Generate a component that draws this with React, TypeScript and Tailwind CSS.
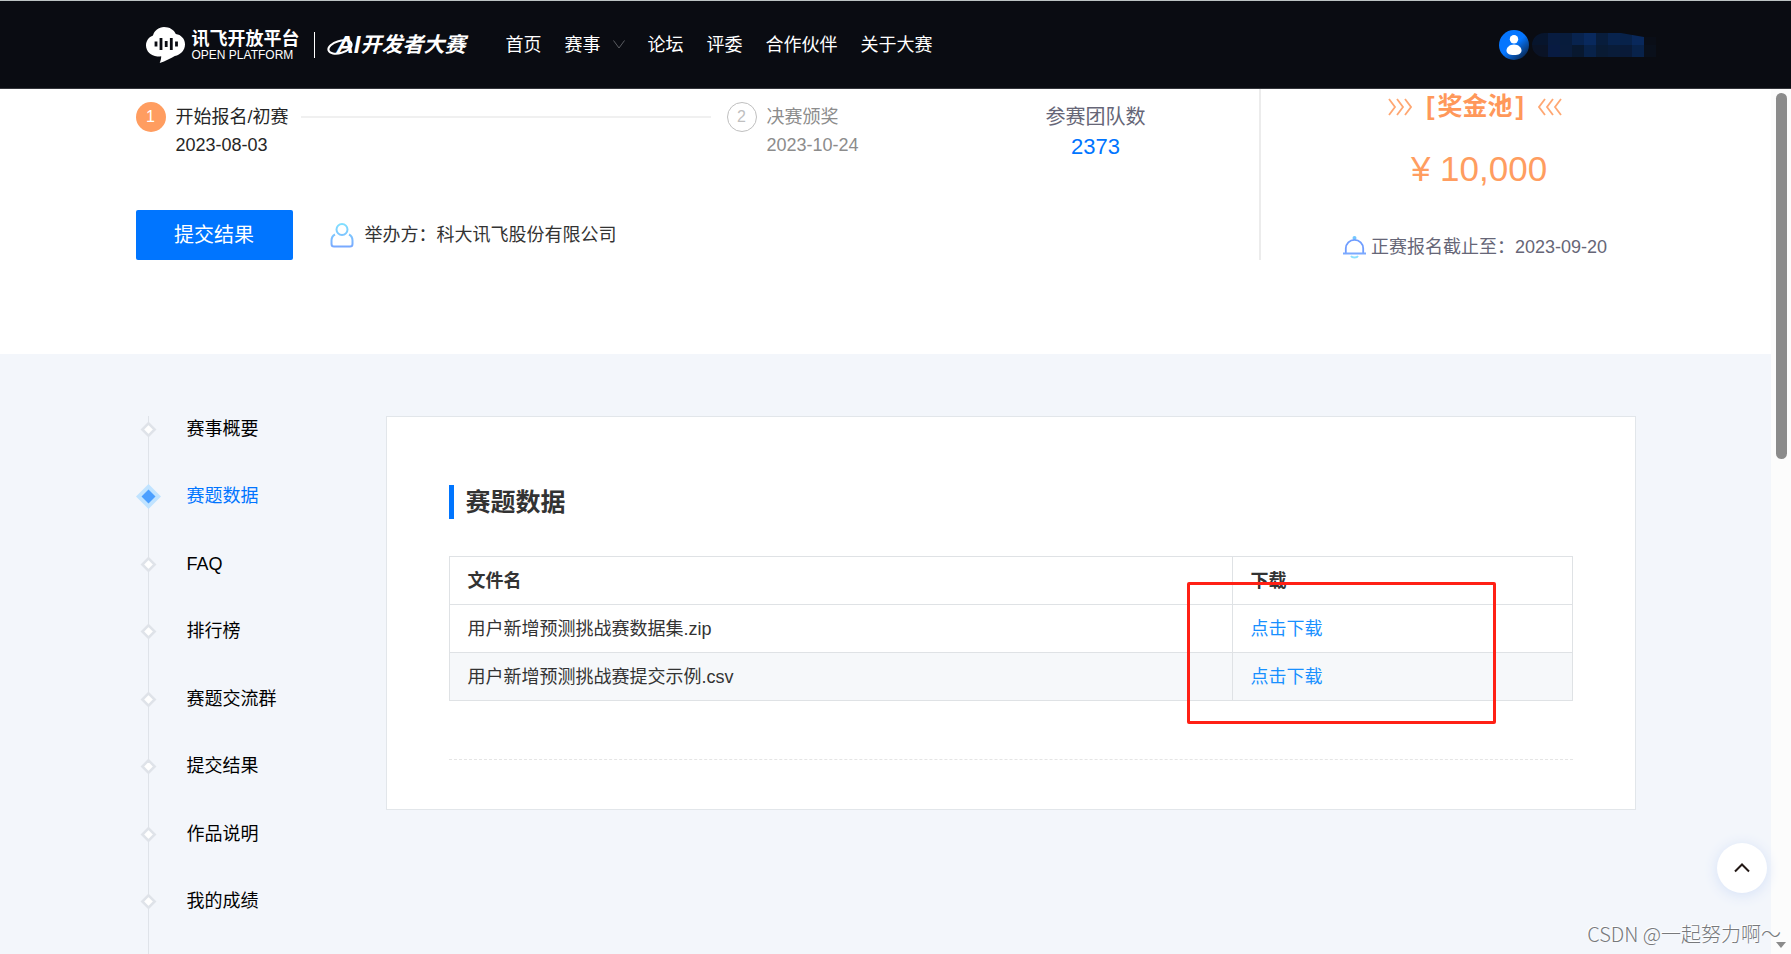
const navItems = [
  { label: "首页" },
  { label: "赛事", hasMenu: true },
  { label: "论坛" },
  { label: "评委" },
  { label: "合作伙伴" },
  { label: "关于大赛" },
];

const sections = [
  "赛事概要",
  "赛题数据",
  "FAQ",
  "排行榜",
  "赛题交流群",
  "提交结果",
  "作品说明",
  "我的成绩",
];

const files = ["用户新增预测挑战赛数据集.zip", "用户新增预测挑战赛提交示例.csv"];

const maskTop = ["#07152d", "#081c40", "#081c3c", "#08234e", "#09295d", "#081d3c", "#08234d", "#08224a", "#09285b", "#0a0e17"];
const maskBottom = ["#0a1326", "#081b42", "#091c3c", "#08182f", "#082249", "#091b34", "#091c39", "#091a38", "#08224a", "#0a101b"];

const Logo = () => (
  <a href="#home" className="flex items-center text-white">
    <svg width="39" height="36" viewBox="0 0 39 36" aria-hidden="true">
      <path
        fill="#fff"
        d="M18 0c5.500 0 10 2.800 11.800 6.900 5.300.6 9.200 5 9.200 10.300 0 5.800-4.300 10.700-10.200 11.800C25.200 30.800 19.500 34.500 13.700 36c1-2.300 1.500-4.700 1.500-6.800-1.400.3-2.700.4-4 .3C4.900 29.100 0 24.400 0 18.600c0-4.700 2.900-8.500 7-10C8.300 3.500 12.700 0 18 0Z"
      />
      <path
        stroke="#0a0c12"
        strokeWidth="2.800"
        d="M10 14.500v5M15 11v12M20.200 14v6M25.300 11v12M30.500 14.500v5"
      />
    </svg>
    <span className="ml-[7px] flex flex-col">
      <span className="text-[18px] leading-5 font-bold">讯飞开放平台</span>
      <span className="text-[12px] leading-3">OPEN PLATFORM</span>
    </span>
    <span className="mx-[14px] h-[26px] w-px bg-white" />
    <span className="relative flex items-center italic font-bold">
      <span className="pl-2 text-[24px] leading-6">AI</span>
      <svg
        className="absolute -left-1 top-0"
        width="30"
        height="24"
        viewBox="0 0 30 24"
        fill="none"
        aria-hidden="true"
      >
        <ellipse cx="15" cy="14" rx="12" ry="6" stroke="#fff" strokeWidth="2" transform="rotate(-16 15 14)" />
      </svg>
      <span className="text-[21px] leading-6">开发者大赛</span>
    </span>
  </a>
);

const UserBadge = () => (
  <div className="ml-auto flex items-center gap-[3px]">
    <button type="button" aria-label="用户">
      <svg width="30" height="30" viewBox="0 0 30 30" className="block">
        <defs>
          <linearGradient id="avatar" x1="0.200" y1="0.200" x2="0.900" y2="1">
            <stop offset="0.400" stopColor="#0576ff" />
            <stop offset="1" stopColor="#0a1a33" />
          </linearGradient>
        </defs>
        <circle cx="15" cy="15" r="15" fill="url(#avatar)" />
        <circle cx="15" cy="9.200" r="4.200" fill="#fff" />
        <path fill="#fff" d="M15 14.500c4.500 0 7.500 3 7.500 6 0 3.200-3 4.500-7.500 4.500s-7.500-1.300-7.500-4.500c0-3 3-6 7.500-6Z" />
      </svg>
    </button>
    {/* masked user name */}
    <svg width="124" height="24" viewBox="0 0 124 24" aria-hidden="true">
      <clipPath id="mask">
        <path d="M12 0h77l23 4h12v20H12A12 12 0 0 1 12 0Z" />
      </clipPath>
      <g clipPath="url(#mask)" shapeRendering="crispEdges">
        {maskTop.map((fill, i) => (
          <rect key={i} x={i ? i * 12 + 4 : 0} y="0" width={i ? 12 : 16} height="12" fill={fill} />
        ))}
        {maskBottom.map((fill, i) => (
          <rect key={i} x={i ? i * 12 + 4 : 0} y="12" width={i ? 12 : 16} height="12" fill={fill} />
        ))}
      </g>
    </svg>
  </div>
);

const Header = () => (
  <header className="shrink-0 border-t border-b border-t-[#bcc3c3] border-b-[#34363b] bg-[#0a0c12]">
    <div className="mx-auto flex h-[87px] max-w-[1520px] items-center pl-[10px]">
      <Logo />
      <nav className="ml-10 flex items-center gap-[23px] text-[18px] leading-6 text-white">
        {navItems.map((item) => (
          <a key={item.label} href="#nav" className="flex items-center gap-3 whitespace-nowrap">
            {item.label}
            {item.hasMenu && (
              <svg width="12" height="9" viewBox="0 0 12 9" fill="none" aria-hidden="true">
                <path stroke="#5b5d62" d="m.5.5 5.500 7.500L11.500.5" />
              </svg>
            )}
          </a>
        ))}
      </nav>
      <UserBadge />
    </div>
  </header>
);

const Arrows = ({ left }: { left?: boolean }) => (
  <svg width="24" height="18" viewBox="0 0 24 18" fill="none" aria-hidden="true">
    <path
      stroke="#ffa772"
      strokeWidth="1.800"
      d={
        left
          ? "M7 1 1 9l6 8M15 1 9 9l6 8M23 1l-6 8 6 8"
          : "m1 1 6 8-6 8M9 1l6 8-6 8M17 1l6 8-6 8"
      }
    />
  </svg>
);

const Hero = () => (
  <section className="shrink-0 bg-white pb-[94px]">
    <div className="mx-auto flex h-[171px] max-w-[1500px]">
      <div className="flex flex-1 flex-col justify-between border-r-2 border-[#ececec] pt-[13px]">
        <div className="flex text-[18px]">
          <div className="flex flex-1 gap-[10px]">
            <span className="flex size-[30px] items-center justify-center rounded-full bg-[#ff9d60] text-[16px] text-white">
              1
            </span>
            <div className="flex-1 text-[#262626]">
              <p className="flex items-center gap-3 leading-[30px]">
                开始报名/初赛
                <span className="mr-4 h-[2px] flex-1 bg-[#f0f0f0]" />
              </p>
              <p className="leading-[26px]">2023-08-03</p>
            </div>
          </div>
          <div className="flex w-[206px] gap-[10px]">
            <span className="flex size-[30px] items-center justify-center rounded-full border border-[#bfbfbf] text-[16px] text-[#bfbfbf]">
              2
            </span>
            <div className="text-[#8c8c8c]">
              <p className="leading-[30px]">决赛颁奖</p>
              <p className="leading-[26px]">2023-10-24</p>
            </div>
          </div>
          <div className="w-[326px] text-center">
            <p className="text-[20px] leading-[30px] text-[#666677]">参赛团队数</p>
            <p className="text-[22px] leading-[30px] text-[#0075ff]">2373</p>
          </div>
        </div>
        <div className="flex items-center">
          <button type="button" className="h-[50px] w-[157px] rounded-xs bg-[#0075ff] text-[20px] text-white">
            提交结果
          </button>
          <svg className="ml-9" width="26" height="26" viewBox="0 0 26 26" fill="none" aria-hidden="true">
            <defs>
              <linearGradient id="person" x1="0" y1="0" x2="0" y2="26" gradientUnits="userSpaceOnUse">
                <stop stopColor="#82e4ff" />
                <stop offset="1" stopColor="#78a6ff" />
              </linearGradient>
            </defs>
            <g stroke="url(#person)" strokeWidth="2">
              <circle cx="13" cy="7.500" r="5.500" />
              <path d="M6 12.500c-2 1-3.500 3-3.500 6V22c0 1.500.8 2.500 2.500 2.500h16c1.700 0 2.500-1 2.500-2.500v-3.500c0-3-1.500-5-3.500-6" />
            </g>
          </svg>
          <p className="ml-[10px] text-[18px] leading-6 text-[#333333]">举办方：科大讯飞股份有限公司</p>
        </div>
      </div>
      <div className="flex w-[375px] flex-col items-center pl-[54px]">
        <h2 className="flex h-9 items-center gap-[14px] text-[25px] font-bold text-[#ff985a]">
          <Arrows />
          <span className="flex gap-[3px]">
            <span>[</span>
            <span>奖金池</span>
            <span>]</span>
          </span>
          <Arrows left />
        </h2>
        <p className="mt-6 pl-2 text-[35px] leading-10 text-[#ff9d60]">¥ 10,000</p>
        <p className="mt-11 flex items-center gap-[5px] text-[18px] leading-7 whitespace-nowrap text-[#666677]">
          <svg width="23" height="23" viewBox="0 0 23 23" fill="none" aria-hidden="true">
            <circle cx="11.500" cy="2" r="2" fill="#73c6ff" />
            <path stroke="#6f9dff" strokeWidth="1.800" d="M2.800 17v-4.500a8.700 8.700 0 0 1 17.400 0V17" />
            <path stroke="#7ba9ff" strokeWidth="2" d="M0 17.500h23" />
            <path stroke="#8ce0ff" strokeWidth="1.800" d="M8 20c1 2 6 2 7 0" />
          </svg>
          正赛报名截止至：2023-09-20
        </p>
      </div>
    </div>
  </section>
);

const Diamond = ({ active }: { active: boolean }) => (
  <svg className="relative" width="25" height="25" viewBox="0 0 25 25" aria-hidden="true">
    {active ? (
      <>
        <path fill="#c0e3ff" d="M12.500 0 25 12.500 12.500 25 0 12.500Z" />
        <path fill="#4b9fff" d="m12.500 5.500 7 7-7 7-7-7Z" />
      </>
    ) : (
      <path fill="#fff" stroke="#dfe3e9" strokeWidth="2.500" d="m12.500 6.300 6.200 6.200-6.200 6.200-6.200-6.200Z" />
    )}
  </svg>
);

const SideNav = ({ current }: { current: string }) => (
  <aside className="relative w-[250px] shrink-0">
    <span className="absolute inset-y-0 left-3 w-px bg-[#dfe3e9]" />
    <ul className="flex h-[499px] flex-col justify-between">
      {sections.map((name) => (
        <li key={name}>
          <a
            href="#section"
            className={`flex h-[26px] items-center gap-[26px] text-[18px] ${
              name === current ? "text-[#0075ff]" : "text-black"
            }`}
          >
            <Diamond active={name === current} />
            {name}
          </a>
        </li>
      ))}
    </ul>
  </aside>
);

const DataCard = () => (
  <div className="flex-1 self-start border border-[#e2e6ea] bg-white px-[62px] pt-[68px] pb-[49px] text-[#333333]">
    <h2 className="border-l-5 border-[#0075ff] pl-3 text-[25px] leading-[34px] font-bold">赛题数据</h2>
    <div className="relative mt-[37px]">
      <table className="w-full table-fixed border-collapse text-left text-[18px] leading-6">
        <thead>
          <tr className="h-12">
            <th className="border border-[#dfe2e5] px-[18px]">文件名</th>
            <th className="w-[340px] border border-[#dfe2e5] px-[18px]">下载</th>
          </tr>
        </thead>
        <tbody>
          {files.map((file) => (
            <tr key={file} className="h-12 even:bg-[#f6f8fa]">
              <td className="border border-[#dfe2e5] px-[18px]">{file}</td>
              <td className="border border-[#dfe2e5] px-[18px]">
                <a href="#download" className="text-[#1890ff]">
                  点击下载
                </a>
              </td>
            </tr>
          ))}
        </tbody>
      </table>
      {/* highlight around the download links */}
      <div className="pointer-events-none absolute top-[26px] right-[77px] h-[142px] w-[309px] rounded-xs border-3 border-[#ff2015]" />
    </div>
    <hr className="mt-[58px] border-dashed border-[#e5e5e5]" />
  </div>
);

const App = () => (
  <div className="relative flex h-screen flex-col overflow-hidden bg-white font-['Liberation_Sans','Noto_Sans_CJK_SC',sans-serif]">
    <Header />
    <div className="flex min-h-0 flex-1">
      <main className="flex min-w-0 flex-1 flex-col overflow-hidden">
        <Hero />
        <section className="flex-1 bg-[#f3f6fb] pt-[62px]">
          <div className="mx-auto flex h-full max-w-[1500px]">
            <SideNav current="赛题数据" />
            <DataCard />
          </div>
        </section>
      </main>
      {/* scroll track */}
      <div className="flex w-5 flex-col items-center justify-between bg-[#fcfcfc] pt-1 pb-[6px]">
        <span className="h-[366px] w-[11px] rounded-full bg-[#8b8b8b]" />
        <svg width="10" height="6" viewBox="0 0 10 6" aria-hidden="true">
          <path fill="#8b8b8b" d="M0 0h10L5 6Z" />
        </svg>
      </div>
    </div>
    <button
      type="button"
      aria-label="返回顶部"
      className="absolute right-6 bottom-[61px] flex size-[50px] items-center justify-center rounded-full bg-white shadow-[0_2px_14px_#d5e1f7]"
    >
      <svg width="16" height="10" viewBox="0 0 16 10" fill="none">
        <path stroke="#231815" strokeWidth="2" d="m1 8.500 7-7 7 7" />
      </svg>
    </button>
    <p className="absolute right-[10px] bottom-1 font-['Noto_Sans_CJK_SC',sans-serif] text-[20px] leading-8 font-light text-[#77797c] [text-shadow:-1px_-1px_0_#ffffff]">
      CSDN @一起努力啊～
    </p>
  </div>
);

export default App;
